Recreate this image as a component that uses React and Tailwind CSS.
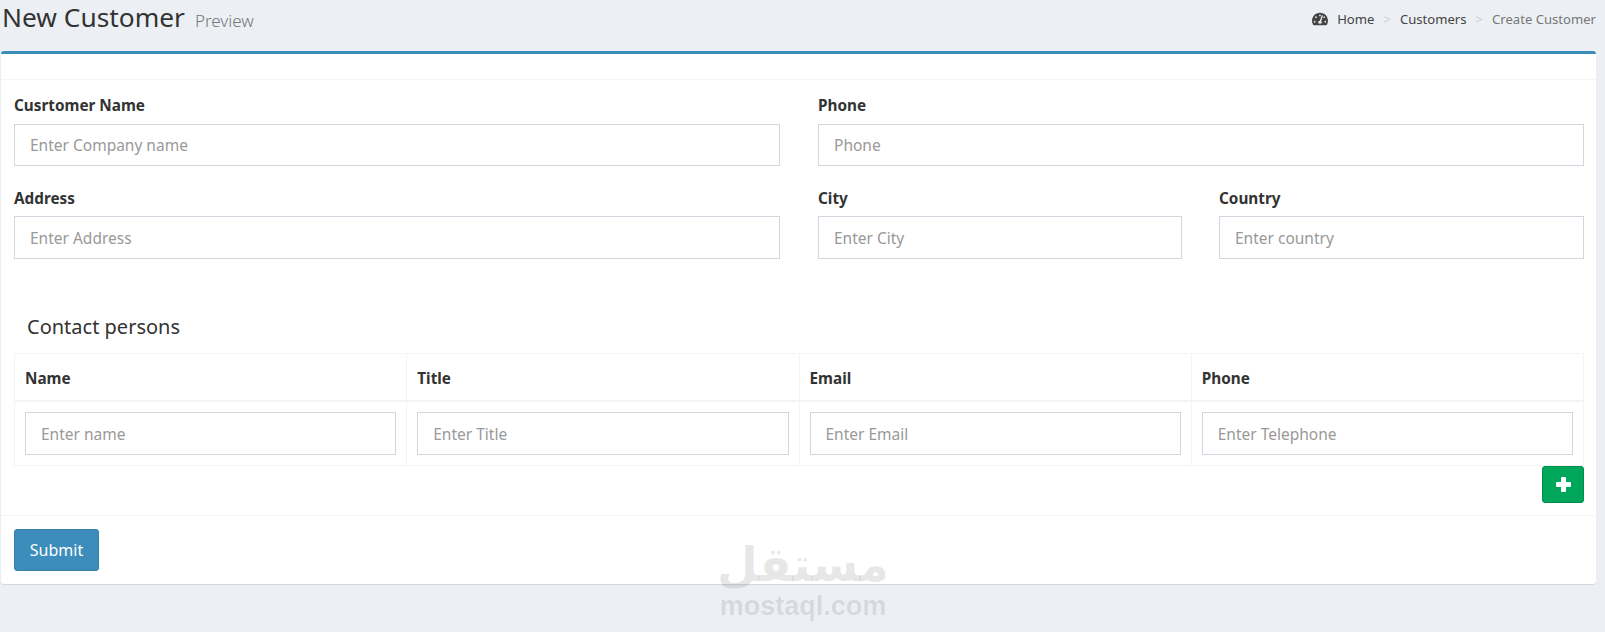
import React from "react";
import { FaTachometerAlt } from "react-icons/fa";

function Field({ label, placeholder, tall }) {
  return (
    <div className="flex flex-col min-w-0">
      <label className={`${tall ? "mb-[8px]" : "mb-[9px]"} h-[20px] text-[15.3px] leading-[20px] font-bold text-[#333]`}>{label}</label>
      <input
        readOnly
        placeholder={placeholder}
        className={`${tall ? "h-[43px]" : "h-[42px]"} w-full border border-[#d2d6de] bg-white px-[15px] text-[15.5px] text-[#555] outline-none placeholder:text-[#999]`}
      />
    </div>
  );
}

function Th({ children }) {
  return (
    <th className="h-[47px] border border-[#f4f4f4] border-b-2 px-[10px] pt-[3px] text-left align-middle text-[15.3px] font-bold text-[#333]">
      {children}
    </th>
  );
}

function Td({ placeholder }) {
  return (
    <td className="h-[65px] border border-[#f4f4f4] px-[10px] align-middle">
      <input
        readOnly
        placeholder={placeholder}
        className="block h-[43px] w-full border border-[#d2d6de] bg-white px-[15px] pt-[2px] text-[15.5px] text-[#555] outline-none placeholder:text-[#999]"
      />
    </td>
  );
}

export default function App() {
  return (
    <div className="relative h-[632px] w-[1605px] overflow-hidden bg-[#ecf0f5] font-['Noto_Sans',sans-serif] text-[#333]">
      <header className="flex h-[51px] items-start justify-between pl-[2px] pr-[9px]">
        <h1 className="flex items-baseline text-[26.3px] leading-[34px] font-normal text-[#333]">
          New Customer
          <small className="ml-[10px] text-[17px] font-light text-[#777]">Preview</small>
        </h1>
        <nav className="mt-[10px] flex items-center text-[13.1px] leading-[18px]">
          <FaTachometerAlt className="mr-[9px] h-[16px] w-[16px] text-[#444]" />
          <span className="text-[#444]">Home</span>
          <span className="mx-[9px] text-[#ccc]">&gt;</span>
          <span className="text-[#444]">Customers</span>
          <span className="mx-[9px] text-[#ccc]">&gt;</span>
          <span className="text-[#777]">Create Customer</span>
        </nav>
      </header>

      <main className="ml-[1px] h-[533px] w-[1595px] rounded-[3px] border-t-[3px] border-[#3c8dbc] bg-white shadow-[0_1px_1px_rgba(0,0,0,0.1)]">
        <div className="h-[26px] border-b border-[#f4f4f4]" />

        <div className="pl-[13px] pr-[12px]">
          <div className="mt-[15px] grid grid-cols-2 gap-x-[38px]">
            <Field label="Cusrtomer Name" placeholder="Enter Company name" />
            <Field label="Phone" placeholder="Phone" />
          </div>
          <div className="mt-[22px] grid grid-cols-2 gap-x-[38px]">
            <Field label="Address" placeholder="Enter Address" tall />
            <div className="grid grid-cols-[364px_1fr] gap-x-[37px]">
              <Field label="City" placeholder="Enter City" tall />
              <Field label="Country" placeholder="Enter country" tall />
            </div>
          </div>

          <h3 className="mt-[52px] ml-[13px] h-[42px] text-[20px] leading-[32px] font-normal text-[#333]">Contact persons</h3>

          <table className="w-full table-fixed border-collapse border border-[#f4f4f4]">
            <thead>
              <tr>
                <Th>Name</Th>
                <Th>Title</Th>
                <Th>Email</Th>
                <Th>Phone</Th>
              </tr>
            </thead>
            <tbody>
              <tr>
                <Td placeholder="Enter name" />
                <Td placeholder="Enter Title" />
                <Td placeholder="Enter Email" />
                <Td placeholder="Enter Telephone" />
              </tr>
            </tbody>
          </table>

          <div className="flex justify-end">
            <button className="flex h-[37px] w-[42px] items-center justify-center rounded-[3px] border border-[#008d4c] bg-[#00a65a] text-white">
              <svg viewBox="0 0 15 15" className="h-[15px] w-[15px]" fill="currentColor">
                <rect x="5" y="0" width="5" height="15" rx="1" />
                <rect x="0" y="5" width="15" height="5" rx="1" />
              </svg>
            </button>
          </div>
        </div>

        <div className="mt-[12px] border-t border-[#f4f4f4] px-[13px] pt-[13px]">
          <button className="h-[42px] w-[85px] rounded-[3px] border border-[#367fa9] bg-[#3c8dbc] text-[16px] text-white">
            Submit
          </button>
        </div>
      </main>

      <div className="pointer-events-none absolute left-[708px] top-[537px] flex w-[190px] flex-col items-center text-[#000]/10">
        <span dir="rtl" className="font-['DejaVu_Sans',sans-serif] text-[47px] leading-[55px] font-bold">مستقل</span>
        <span className="font-['Liberation_Sans',sans-serif] text-[27px] leading-[28px] font-bold">mostaql.com</span>
      </div>
    </div>
  );
}
